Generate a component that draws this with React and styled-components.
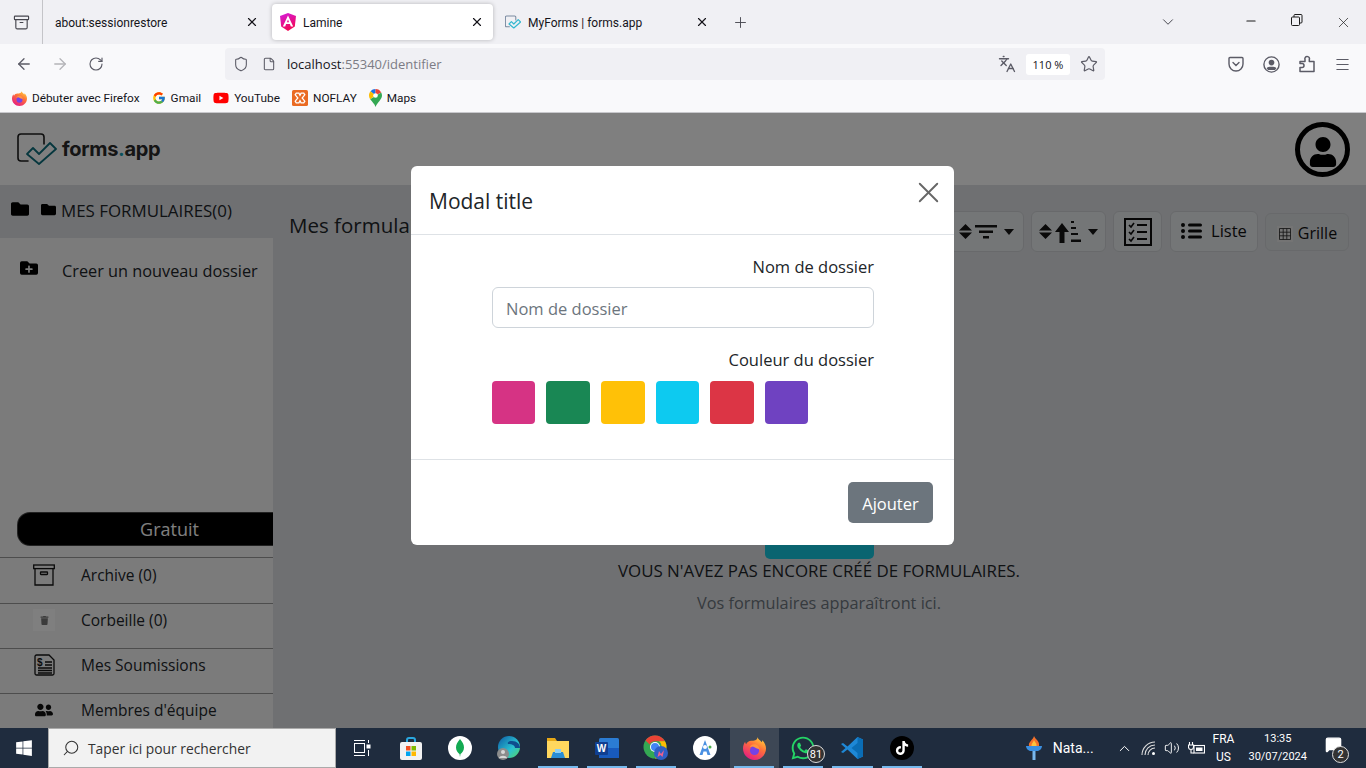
import React from "react";
import styled, { createGlobalStyle } from "styled-components";
import {
  ArrowLeft, ArrowRight, RotateCw, Shield, File, X, Plus, ChevronDown, Minus, Star,
  Languages, Menu, ChevronUp, Search, Volume2, MessageSquare, Archive,
} from "lucide-react";
import { FaFolder, FaFolderPlus, FaWindows, FaWhatsapp, FaTiktok, FaYoutube, FaUserFriends, FaTrash, FaUser } from "react-icons/fa";
import { FcGoogle } from "react-icons/fc";

const Global = createGlobalStyle`
  html, body { margin: 0; padding: 0; height: 100%; overflow: hidden; }
  body { font-family: "Open Sans", "Liberation Sans", sans-serif; }
  #root { height: 100%; }
`;

function App() {
  return (
    <Shell>
      <Global />
      <TabBar>
        <TabsButton><Archive size={17} strokeWidth={1.6} /></TabsButton>
        <Tab>
          <TabTitle>about:sessionrestore</TabTitle>
          <X size={14} />
        </Tab>
        <Tab $active>
          <AngularLogo />
          <TabTitle>Lamine</TabTitle>
          <X size={14} />
        </Tab>
        <Tab>
          <FormsLogo size={16} />
          <TabTitle>MyForms | forms.app</TabTitle>
          <X size={14} />
        </Tab>
        <NewTab><Plus size={17} strokeWidth={1.3} /></NewTab>
        <TabBarEnd>
          <ChevronDown size={18} strokeWidth={1.3} />
          <WinControls>
            <WinButton><Minus size={14} /></WinButton>
            <WinButton><RestoreIcon /></WinButton>
            <WinButton><X size={17} strokeWidth={1} /></WinButton>
          </WinControls>
        </TabBarEnd>
      </TabBar>

      <NavBar>
        <NavButtons>
          <ArrowLeft size={18} strokeWidth={1.7} />
          <ArrowRight size={18} strokeWidth={1.7} color="#b4b4b8" />
          <RotateCw size={16} strokeWidth={1.7} />
        </NavButtons>
        <UrlBar>
          <Shield size={16} strokeWidth={1.6} />
          <File size={14} strokeWidth={1.8} />
          <UrlText>localhost<span>:55340/identifier</span></UrlText>
          <UrlEnd>
            <Languages size={18} strokeWidth={1.8} />
            <ZoomBadge>110 %</ZoomBadge>
            <Star size={18} strokeWidth={1.6} />
          </UrlEnd>
        </UrlBar>
        <NavEnd>
          <PocketIcon />
          <AccountIcon />
          <PuzzleIcon />
          <Menu size={17} strokeWidth={1.5} />
        </NavEnd>
      </NavBar>

      <Bookmarks>
        <Bookmark><FirefoxLogo size={15} />Débuter avec Firefox</Bookmark>
        <Bookmark><FcGoogle size={14} />Gmail</Bookmark>
        <Bookmark><FaYoutube size={16} color="#f00" />YouTube</Bookmark>
        <Bookmark><XamppLogo />NOFLAY</Bookmark>
        <Bookmark><MapsPin />Maps</Bookmark>
      </Bookmarks>

      <Page>
        <Header>
          <Brand>
            <FormsLogo size={40} dark />
            <BrandName>forms<em>.</em>app</BrandName>
          </Brand>
          <Avatar><FaUser size={30} /></Avatar>
        </Header>
        <Body>
          <Sidebar>
            <SideTop>
              <FaFolder size={18} />
              <FaFolder size={15} />
              <span>MES FORMULAIRES(0)</span>
            </SideTop>
            <NewFolder>
              <FaFolderPlus size={18} />
              <span>Creer un nouveau dossier</span>
            </NewFolder>
            <FreePlan>Gratuit</FreePlan>
            <SideItem><SideIcon><BoxIcon /></SideIcon>Archive (0)</SideItem>
            <SideItem><SideIcon $tile><FaTrash size={9} /></SideIcon>Corbeille (0)</SideItem>
            <SideItem><SideIcon><ReceiptIcon /></SideIcon>Mes Soumissions</SideItem>
            <SideItem><SideIcon><FaUserFriends size={18} /></SideIcon>Membres d'équipe</SideItem>
          </Sidebar>
          <Main>
            <ToolRow>
              <MainTitle>Mes formulaires</MainTitle>
              <Tools>
                <ToolButton $w={75}><SortArrows /><FilterLines /><Caret /></ToolButton>
                <ToolButton $w={75}><SortArrows /><SortAsc /><Caret /></ToolButton>
                <ToolButton $w={49}><ChecklistIcon /></ToolButton>
                <ToolButton $w={88} $wide><ListIcon />Liste</ToolButton>
                <ToolButton $w={84} $muted><GridIcon />Grille</ToolButton>
              </Tools>
            </ToolRow>
            <Empty>
              <CreateButton />
              <EmptyTitle>VOUS N'AVEZ PAS ENCORE CRÉÉ DE FORMULAIRES.</EmptyTitle>
              <EmptyText>Vos formulaires apparaîtront ici.</EmptyText>
            </Empty>
          </Main>
        </Body>

        <Backdrop>
          <Modal>
            <ModalHeader>
              <ModalTitle>Modal title</ModalTitle>
              <CloseButton><X size={35} strokeWidth={1.3} /></CloseButton>
            </ModalHeader>
            <ModalBody>
              <FieldLabel>Nom de dossier</FieldLabel>
              <FieldInput placeholder="Nom de dossier" />
              <FieldLabel $second>Couleur du dossier</FieldLabel>
              <Swatches>
                {["#d63384", "#198754", "#ffc107", "#0dcaf0", "#dc3545", "#6f42c1"].map((c) => (
                  <Swatch key={c} $color={c} />
                ))}
              </Swatches>
            </ModalBody>
            <ModalFooter>
              <AddButton>Ajouter</AddButton>
            </ModalFooter>
          </Modal>
        </Backdrop>
      </Page>

      <Taskbar>
        <StartButton><FaWindows size={18} /></StartButton>
        <SearchBox>
          <Search size={18} strokeWidth={1.4} style={{ transform: "scaleX(-1)" }} />
          Taper ici pour rechercher
        </SearchBox>
        <TaskIcons>
          <TaskIcon><TaskViewIcon /></TaskIcon>
          <TaskIcon><StoreIcon /></TaskIcon>
          <TaskIcon><MongoIcon /></TaskIcon>
          <TaskIcon><EdgeIcon /></TaskIcon>
          <TaskIcon $open><ExplorerIcon /></TaskIcon>
          <TaskIcon $open><WordIcon /></TaskIcon>
          <TaskIcon $open><ChromeIcon /></TaskIcon>
          <TaskIcon><CompassIcon /></TaskIcon>
          <TaskIcon $open $current><FirefoxLogo size={23} /></TaskIcon>
          <TaskIcon $open>
            <FaWhatsapp size={26} color="#25d366" />
            <CountBadge>81</CountBadge>
          </TaskIcon>
          <TaskIcon $open><VsCodeIcon /></TaskIcon>
          <TaskIcon $open><TikTokIcon /></TaskIcon>
        </TaskIcons>
        <Tray>
          <Weather><TorchIcon />Nata...</Weather>
          <ChevronUp size={17} strokeWidth={1.4} />
          <WifiIcon />
          <Volume2 size={16} strokeWidth={1.4} />
          <BatteryIcon />
          <TrayText><span>FRA</span><span>US</span></TrayText>
          <Clock><span>13:35</span><span>30/07/2024</span></Clock>
          <Notif>
            <MessageSquare size={17} fill="#fff" />
            <NotifBadge>2</NotifBadge>
          </Notif>
        </Tray>
      </Taskbar>
    </Shell>
  );
}

/* drawings */

const AngularLogo = () => (
  <svg width="16" height="18" viewBox="0 0 16 18">
    <defs>
      <linearGradient id="ang" x1="0.2" y1="0" x2="0.6" y2="1">
        <stop offset="0" stopColor="#d51bd6" />
        <stop offset="1" stopColor="#f5074f" />
      </linearGradient>
    </defs>
    <path d="M8 0 0 3l1.200 10.500L8 18l6.800-4.500L16 3z" fill="url(#ang)" />
    <path d="M8 2.500 2.800 13.500h2.400l.9-2.400h3.800l.9 2.400h2.400zM6.900 9.200 8 6.500l1.100 2.700z" fill="#fff" />
  </svg>
);

const FormsLogo = ({ size, dark }) => (
  <svg width={size} height={size} viewBox="0 0 40 40" fill="none">
    <path
      d="M27 15V8a3 3 0 0 0-3-3H4a3 3 0 0 0-3 3v21a3 3 0 0 0 3 3h7"
      stroke={dark ? "#1c1c1c" : "#7a8aa0"}
      strokeWidth={dark ? 1.6 : 2.6}
      strokeLinecap="round"
    />
    <path
      d="m10 25 6-6 6 6 11-11 6 6-17 15z"
      stroke={dark ? "#0d6f7d" : "#35b8d0"}
      strokeWidth={dark ? 1.8 : 3}
      strokeLinejoin="round"
    />
  </svg>
);

const RestoreIcon = () => (
  <svg width="12" height="12" viewBox="0 0 12 12" fill="none" stroke="#1a1a1a">
    <rect x="0.5" y="3" width="8" height="8.5" rx="1" />
    <path d="M3 3V1.500a1 1 0 0 1 1-1h6a1 1 0 0 1 1 1V8a1 1 0 0 1-1 1H8.500" />
  </svg>
);

const PocketIcon = () => (
  <svg width="16" height="16" viewBox="0 0 16 16" fill="none" stroke="#5b5b66" strokeWidth="1.4">
    <path d="M2 1.500h12a1 1 0 0 1 1 1V8a7 7 0 0 1-14 0V2.500a1 1 0 0 1 1-1z" />
    <path d="m5 6.500 3 3 3-3" strokeLinecap="round" />
  </svg>
);

const AccountIcon = () => (
  <svg width="17" height="17" viewBox="0 0 17 17">
    <circle cx="8.5" cy="8.5" r="7.6" fill="none" stroke="#5b5b66" strokeWidth="1.4" />
    <circle cx="8.5" cy="6.6" r="2.8" fill="#5b5b66" />
    <path d="M3.600 12.200c1-1.800 8.800-1.800 9.800 0L12 14H5z" fill="#5b5b66" />
  </svg>
);

const PuzzleIcon = () => (
  <svg width="16" height="18" viewBox="0 0 16 18" fill="none" stroke="#5b5b66" strokeWidth="1.5" strokeLinejoin="round">
    <path d="M1 6.500h5v-2a2.200 2.200 0 0 1 0-1.500 2.200 2.200 0 0 1 4.300 1.500v2H15v10H1v-4h2a2 2 0 0 0 0-4H1z" />
  </svg>
);

const FirefoxLogo = ({ size }) => (
  <svg width={size} height={size} viewBox="0 0 24 24">
    <defs>
      <linearGradient id={`ffx${size}`} x1="0.8" y1="0" x2="0.2" y2="1">
        <stop offset="0" stopColor="#ffd43b" />
        <stop offset="0.4" stopColor="#ff7139" />
        <stop offset="1" stopColor="#e31587" />
      </linearGradient>
    </defs>
    <path
      d="M15 0c.6 2.500 3 3.200 4.500 5.500.5-.7.6-1.300.7-2C22.900 6.500 24 9.200 24 12c0 6.600-5.400 12-12 12S0 18.600 0 12c0-2.500.8-5 2.200-7 .1 1 .4 1.800 1 2.500C4.300 5.300 6.300 4 8.500 4 11.500 4 15.500 3.500 15 0z"
      fill={`url(#ffx${size})`}
    />
    <circle cx="12" cy="14" r="4.8" fill="#7542e5" />
    <path d="M7 11c1.500-1.500 3.500-1.500 5.500 0s4 1 5 2.500c-.5-3.500-2.500-6-5.500-6S7.500 9 7 11z" fill="#ff9640" />
  </svg>
);

const XamppLogo = () => (
  <svg width="16" height="16" viewBox="0 0 15 15">
    <rect width="15" height="15" rx="1.5" fill="#ea6a22" />
    <path d="M4 3h2.500l1 2 1-2H11l1 1.500-2.500 3 2.500 3L11 12H8.500l-1-2-1 2H4l-1-1.500 2.500-3-2.500-3z" fill="none" stroke="#fff" strokeWidth="1.2" />
  </svg>
);

const MapsPin = () => (
  <svg width="13" height="18" viewBox="0 0 13 18">
    <path d="M6.500 0A6.500 6.500 0 0 0 1.500 2.300l5 4.200z" fill="#1a73e8" />
    <path d="M6.500 0a6.500 6.500 0 0 1 5.700 3.400L6.500 6.500z" fill="#ea4335" />
    <path d="M0 6.500c0-1.600.6-3.100 1.500-4.200l5 4.200-5.300 3.800A6.500 6.500 0 0 1 0 6.500z" fill="#fbbc04" />
    <path d="M12.200 3.400c.5.9.8 2 .8 3.100 0 4-4.500 6.500-6.500 11.500-.8-3-3.500-5.300-5.300-7.700z" fill="#34a853" />
    <circle cx="6.5" cy="6.5" r="2.3" fill="#fff" />
  </svg>
);

const BoxIcon = () => (
  <svg width="22" height="22" viewBox="0 0 22 22" fill="none" stroke="#141414" strokeWidth="1.3">
    <rect x="0.7" y="1" width="20.6" height="3.6" />
    <path d="M2 4.600V21h18V4.600" />
    <rect x="7.5" y="8" width="7" height="2.5" rx="0.5" />
  </svg>
);

const ReceiptIcon = () => (
  <svg width="22" height="22" viewBox="0 0 22 22" fill="none" stroke="#141414" strokeWidth="1.3">
    <path d="M3.500 1H16l5 5v13.500a1.500 1.500 0 0 1-1.500 1.500h-16A1.500 1.500 0 0 1 2 19.500v-17A1.500 1.500 0 0 1 3.500 1z" />
    <path d="M12 8h7M12 11h7M5 14h14M5 16.500h14M5 19h14" />
    <text x="4" y="11.5" fontSize="10" fontWeight="700" fill="#141414" stroke="none" fontFamily="Liberation Sans">$</text>
  </svg>
);

const SortArrows = () => (
  <svg width="13" height="15" viewBox="0 0 13 15" fill="#141414">
    <path d="M6.500 0 13 6.500H0zM6.500 15 0 8.500h13z" />
  </svg>
);

const FilterLines = () => (
  <svg width="22" height="15" viewBox="0 0 22 15" fill="#141414">
    <rect y="1" width="22" height="2.5" />
    <rect x="4" y="6.5" width="14" height="2.5" />
    <rect x="8" y="12" width="6" height="2.5" />
  </svg>
);

const SortAsc = () => (
  <svg width="26" height="23" viewBox="0 0 26 23" fill="#141414">
    <path d="M7 3 14 12H9.500v11h-5V12H0z" />
    <rect x="16" y="1" width="3" height="2" />
    <rect x="16" y="7" width="5" height="2" />
    <rect x="16" y="13" width="7" height="2" />
    <rect x="16" y="19.5" width="10" height="2.5" />
  </svg>
);

const Caret = () => (
  <svg width="10" height="6" viewBox="0 0 10 6" fill="#141414">
    <path d="M0 0h10L5 6z" />
  </svg>
);

const ChecklistIcon = () => (
  <svg width="28" height="28" viewBox="0 0 28 28" fill="none" stroke="#0c0c0c">
    <rect x="1" y="1" width="26" height="26" strokeWidth="2" />
    <path d="m5 7 2 2 3-4M5 14l2 2 3-4M5 21l2 2 3-4" strokeWidth="1.6" />
    <path d="M13 7h10M13 14h10M13 21h10" strokeWidth="2" />
  </svg>
);

const ListIcon = () => (
  <svg width="21" height="16" viewBox="0 0 21 16" fill="#0c0c0c">
    <circle cx="2" cy="2" r="2" />
    <circle cx="2" cy="8" r="2" />
    <circle cx="2" cy="14" r="2" />
    <rect x="7" y="0.5" width="14" height="3" rx="1.5" />
    <rect x="7" y="6.5" width="14" height="3" rx="1.5" />
    <rect x="7" y="12.5" width="14" height="3" rx="1.5" />
  </svg>
);

const GridIcon = () => (
  <GridTile>
    <svg width="12" height="12" viewBox="0 0 12 12" fill="none" stroke="#222">
      <path d="M.5.500h11v11H.5zM4.200.500v11M7.800.500v11M.5 4.200h11M.5 7.800h11" strokeWidth="0.8" />
    </svg>
  </GridTile>
);

const TaskViewIcon = () => (
  <svg width="18" height="18" viewBox="0 0 18 18" fill="none" stroke="#fff">
    <rect x="1.5" y="4.5" width="10" height="9" />
    <path d="M1 1.500h11M1 16.500h11" />
    <rect x="14" y="6" width="3" height="3" fill="#fff" />
    <path d="M15.500 1v3M15.500 11v6" />
  </svg>
);

const StoreIcon = () => (
  <svg width="24" height="24" viewBox="0 0 24 24">
    <path d="M8 7V4a2 2 0 0 1 2-2h4a2 2 0 0 1 2 2v3" fill="none" stroke="#2aa8e0" strokeWidth="2" />
    <rect x="1" y="6" width="22" height="18" rx="2" fill="#f2f2f2" />
    <rect x="7" y="10" width="4.5" height="4.5" fill="#f25022" />
    <rect x="12.5" y="10" width="4.5" height="4.5" fill="#7fba00" />
    <rect x="7" y="15.5" width="4.5" height="4.5" fill="#00a4ef" />
    <rect x="12.5" y="15.5" width="4.5" height="4.5" fill="#ffb900" />
  </svg>
);

const MongoIcon = () => (
  <svg width="24" height="24" viewBox="0 0 24 24">
    <circle cx="12" cy="12" r="12" fill="#fff" />
    <path d="M12 3c2.500 3 4 5.500 4 8.500 0 3-2 5.500-3.500 6.500L12 21l-.5-3C10 17 8 14.500 8 11.500 8 8.500 9.500 6 12 3z" fill="#13aa52" />
  </svg>
);

const EdgeIcon = () => (
  <svg width="24" height="24" viewBox="0 0 24 24">
    <defs>
      <linearGradient id="edge" x1="0" y1="0" x2="1" y2="1">
        <stop offset="0" stopColor="#0c59a4" />
        <stop offset="0.6" stopColor="#2bc3d2" />
        <stop offset="1" stopColor="#5ad35f" />
      </linearGradient>
    </defs>
    <circle cx="12" cy="11" r="11" fill="url(#edge)" />
    <path d="M11 8c5 0 7 2 7 4h5c0-4-3-7-8-7-3 0-5 1-4 3z" fill="#0f4e8e" />
    <circle cx="6" cy="18" r="6" fill="#8c8c8c" />
    <circle cx="6" cy="16" r="2" fill="#d8d8d8" />
    <path d="M2 22c1-3 7-3 8 0z" fill="#d8d8d8" />
  </svg>
);

const ExplorerIcon = () => (
  <svg width="24" height="24" viewBox="0 0 24 24">
    <path d="M1 2h8l2 3H1z" fill="#e6a817" />
    <rect x="1" y="5" width="22" height="17" fill="#ffd75e" />
    <path d="M7 16h10l2 6H5z" fill="#2a8dd4" />
    <rect x="9" y="13" width="6" height="4" fill="#8dd0f5" />
  </svg>
);

const WordIcon = () => (
  <svg width="24" height="24" viewBox="0 0 24 24">
    <rect x="4" y="2" width="20" height="20" rx="1.5" fill="#2b7cd3" />
    <rect x="4" y="12" width="20" height="10" fill="#185abd" />
    <rect x="0" y="6" width="13" height="13" rx="1" fill="#103f91" />
    <text x="6.5" y="16" textAnchor="middle" fontSize="10" fontWeight="700" fill="#fff" fontFamily="Liberation Sans">W</text>
  </svg>
);

const ChromeIcon = () => (
  <svg width="26" height="26" viewBox="0 0 26 26">
    <circle cx="12" cy="12" r="11.5" fill="#34a853" />
    <path d="M12 .5a11.500 11.500 0 0 1 10 5.800H12a5.800 5.800 0 0 0-5.300 3.200L2.500 5.500A11.500 11.500 0 0 1 12 .5z" fill="#ea4335" />
    <path d="M22 6.300a11.500 11.500 0 0 1-10 17.200l5-8.500a5.800 5.800 0 0 0-1-8.700z" fill="#fbbc04" />
    <circle cx="12" cy="12" r="5" fill="#fff" />
    <circle cx="12" cy="12" r="4" fill="#4285f4" />
    <circle cx="18" cy="18" r="7" fill="#2f5fc4" />
    <path d="m14.500 22 1.500-6 2 3 3-4-1.500 7-2-2z" fill="#f0608a" />
  </svg>
);

const CompassIcon = () => (
  <svg width="24" height="24" viewBox="0 0 24 24">
    <circle cx="12" cy="12" r="12" fill="#fff" />
    <path d="M12 4 6.500 19h3l1-3.500h3l1 3.500h3z" fill="#4a90e2" />
    <circle cx="12" cy="11" r="2" fill="#fff" />
    <circle cx="17" cy="11" r="1.5" fill="#4caf50" />
  </svg>
);

const VsCodeIcon = () => (
  <svg width="24" height="24" viewBox="0 0 24 24">
    <path d="M17.500 1 23 3.500v17L17.500 23l-10-9.500L3 17l-2-1 4.500-4L1 8l2-1 4.500 3.500z" fill="#1e88d6" />
    <path d="M17.500 1 23 3.500v17L17.500 23v-6l-6-5 6-5z" fill="#0a6db5" />
  </svg>
);

const TikTokIcon = () => (
  <TikTokDisc><FaTiktok size={14} color="#fff" /></TikTokDisc>
);

const TorchIcon = () => (
  <svg width="16" height="24" viewBox="0 0 16 24">
    <path d="M8 0c1 3 6 5 5 10H3C2 6 7 4 8 0z" fill="#f4722b" />
    <path d="M8 4c.5 2 3 3 2.500 6h-5C5 8 7.500 6 8 4z" fill="#ffc23d" />
    <path d="M0 10h16c0 3-3 5-5 5H5c-2 0-5-2-5-5z" fill="#3b8fe0" />
    <rect x="6.5" y="15" width="3" height="9" fill="#79b8ee" />
  </svg>
);

const WifiIcon = () => (
  <svg width="15" height="15" viewBox="0 0 15 15" fill="none" stroke="#ddd" strokeWidth="1.1">
    <path d="M1 14A13 13 0 0 1 14 1M4 14A10 10 0 0 1 14 4M7 14a7 7 0 0 1 7-7" />
    <circle cx="12.5" cy="12.5" r="1.5" fill="#fff" stroke="none" />
  </svg>
);

const BatteryIcon = () => (
  <svg width="17" height="15" viewBox="0 0 17 15" fill="none" stroke="#fff" strokeWidth="1.1">
    <path d="M1.500 1v3M4.500 1v3M.5 4h5v2a2.500 2.500 0 0 1-5 0zM3 8.500V12h3" />
    <rect x="6" y="4.5" width="10.5" height="7.5" />
    <rect x="8" y="6.5" width="6.5" height="3.5" fill="#fff" stroke="none" />
  </svg>
);

/* chrome */

const Shell = styled.div`
  height: 100vh;
  display: flex;
  flex-direction: column;
  overflow: hidden;
  color: #15141a;
`;

const TabBar = styled.div`
  height: 44px;
  flex: none;
  background: #f0f0f4;
  display: flex;
  align-items: center;
  font-family: Roboto, sans-serif;
  font-size: 12px;
`;

const TabsButton = styled.div`
  width: 43px;
  height: 44px;
  display: flex;
  align-items: center;
  justify-content: center;
  flex: none;
  border-right: 1px solid #c4c4c8;
  box-sizing: border-box;
  color: #45454d;
`;

const Tab = styled.div`
  width: 221px;
  height: 36px;
  margin-left: 4px;
  padding: 0 9px 0 8px;
  box-sizing: border-box;
  display: flex;
  align-items: center;
  gap: 7px;
  border-radius: 4px;
  background: ${(p) => (p.$active ? "#fff" : "transparent")};
  box-shadow: ${(p) => (p.$active ? "0 0 4px rgba(0,0,0,.25)" : "none")};
`;

const TabTitle = styled.span`
  flex: 1;
  padding-top: 1px;
  white-space: nowrap;
`;

const NewTab = styled.div`
  width: 30px;
  margin-left: 7px;
  display: flex;
  justify-content: center;
  color: #45454d;
`;

const TabBarEnd = styled.div`
  margin-left: auto;
  display: flex;
  align-items: center;
  color: #45454d;
`;

const WinControls = styled.div`
  display: flex;
  margin-left: 51px;
  color: #1a1a1a;
`;

const WinButton = styled.div`
  width: 46px;
  display: flex;
  justify-content: center;
`;

const NavBar = styled.div`
  height: 40px;
  flex: none;
  background: #f9f9fb;
  display: flex;
  align-items: center;
  color: #5b5b66;
`;

const NavButtons = styled.div`
  width: 225px;
  padding-left: 15px;
  box-sizing: border-box;
  display: flex;
  align-items: center;
  gap: 18px;
  svg:last-child { margin-left: 1px; }
`;

const UrlBar = styled.div`
  width: 880px;
  height: 32px;
  padding: 0 7px 0 8px;
  box-sizing: border-box;
  border-radius: 4px;
  background: #f0f0f4;
  display: flex;
  align-items: center;
  gap: 13px;
`;

const UrlText = styled.div`
  margin-left: -2px;
  font-size: 13px;
  color: #15141a;
  span { color: #7c7c85; }
`;

const UrlEnd = styled.div`
  margin-left: auto;
  display: flex;
  align-items: center;
  gap: 10px;
`;

const ZoomBadge = styled.div`
  width: 44px;
  height: 21px;
  background: #fff;
  border-radius: 3px;
  font-size: 11px;
  color: #15141a;
  display: flex;
  align-items: center;
  justify-content: center;
`;

const NavEnd = styled.div`
  flex: 1;
  display: flex;
  justify-content: flex-end;
  align-items: center;
  gap: 19px;
  padding-right: 15px;
`;

const Bookmarks = styled.div`
  height: 29px;
  flex: none;
  box-sizing: border-box;
  background: #f9f9fb;
  border-bottom: 1px solid #c8c8cc;
  padding-left: 12px;
  display: flex;
  align-items: center;
  gap: 12px;
  font-family: Roboto, sans-serif;
  font-size: 11.8px;
`;

const Bookmark = styled.div`
  display: flex;
  align-items: center;
  gap: 5px;
`;

/* page */

const Page = styled.div`
  position: relative;
  flex: 1;
  min-height: 0;
  display: flex;
  flex-direction: column;
  overflow: hidden;
  font-size: 16px;
  color: #212529;
`;

const Header = styled.div`
  height: 72px;
  flex: none;
  background: #fff;
  padding: 0 16px 0 17px;
  display: flex;
  align-items: center;
  justify-content: space-between;
`;

const Brand = styled.div`
  display: flex;
  align-items: center;
  gap: 5px;
`;

const BrandName = styled.div`
  margin-top: -1px;
  font-family: Inter, sans-serif;
  font-size: 20px;
  font-weight: 700;
  letter-spacing: -0.3px;
  color: #2a2a2a;
  em { font-style: normal; color: #12a0b5; }
`;

const Avatar = styled.div`
  width: 55px;
  height: 55px;
  border: 5px solid #000;
  border-radius: 50%;
  box-sizing: border-box;
  color: #000;
  display: flex;
  align-items: flex-end;
  justify-content: center;
  overflow: hidden;
  padding-bottom: 5px;
`;

const Body = styled.div`
  flex: 1;
  min-height: 0;
  display: flex;
  background: #dfe1e5;
`;

const Sidebar = styled.div`
  width: 273px;
  flex: none;
  display: flex;
  flex-direction: column;
  overflow: hidden;
  background: #f6f6f6;
`;

const SideTop = styled.div`
  height: 53px;
  flex: none;
  box-sizing: border-box;
  padding: 0 0 3px 11px;
  background: #dfe1e5;
  display: flex;
  align-items: center;
  gap: 12px;
  color: #000;
  svg { margin-top: -2px; }
  span { margin-left: -7px; color: #212529; font-size: 16.9px; }
`;

const NewFolder = styled.div`
  height: 66px;
  flex: none;
  padding-left: 20px;
  display: flex;
  align-items: center;
  gap: 24px;
  color: #000;
  svg { margin-top: -6px; }
  span { color: #212529; font-size: 16.3px; white-space: nowrap; }
`;

const FreePlan = styled.div`
  margin: 209px -48px 12px 18px;
  height: 32px;
  flex: none;
  border-radius: 12px 0 0 12px;
  background: #000;
  color: #fff;
  font-size: 18px;
  display: flex;
  align-items: center;
  justify-content: center;
  box-shadow: 0 0 0 1px #444;
`;

const SideItem = styled.div`
  height: 45px;
  flex: none;
  box-sizing: border-box;
  border-top: 1.5px solid #9a9a9a;
  display: flex;
  align-items: center;
  gap: 26px;
  padding: 0 0 12px 33px;
  font-size: 15.5px;
  ${FreePlan} + & {
    height: 46px;
    padding-bottom: 11px;
  }
`;

const SideIcon = styled.div`
  width: 22px;
  height: 22px;
  display: flex;
  align-items: center;
  justify-content: center;
  color: #111;
  background: ${(p) => (p.$tile ? "#fff" : "transparent")};
  svg { color: ${(p) => (p.$tile ? "#777" : "#111")}; }
`;

const Main = styled.div`
  flex: 1;
  min-width: 0;
  display: flex;
  flex-direction: column;
  padding: 26px 17px 0 16px;
`;

const ToolRow = styled.div`
  display: flex;
  align-items: flex-start;
  justify-content: space-between;
`;

const MainTitle = styled.div`
  font-size: 20.5px;
  line-height: 29px;
  color: #212529;
`;

const Tools = styled.div`
  display: flex;
  align-items: center;
  gap: 7px;
`;

const ToolButton = styled.div`
  width: ${(p) => p.$w}px;
  height: ${(p) => (p.$muted ? "38px" : "41px")};
  margin-left: ${(p) => (p.$wide ? "1px" : "0")};
  padding: ${(p) => (p.$muted ? "2px 0 0" : p.$wide ? "0 0 2px" : "0")};
  box-sizing: border-box;
  border-radius: 6px;
  background: ${(p) => (p.$muted ? "#dde0e3" : "#e9ecef")};
  border: 1px solid #d0d3d6;
  display: flex;
  align-items: center;
  justify-content: center;
  gap: ${(p) => (p.$wide ? "9px" : "3px")};
  color: #111;
  font-size: ${(p) => (p.$wide ? "16.5px" : "16px")};
  svg:last-child:not(:first-child) { margin-left: 4px; }
`;

const GridTile = styled.span`
  width: 16px;
  height: 16px;
  margin-right: 2px;
  margin-top: 2px;
  display: flex;
  align-items: center;
  justify-content: center;
  background: #e8e8e8;
`;

const Empty = styled.div`
  margin-top: 269px;
  display: flex;
  flex-direction: column;
  align-items: center;
`;

const CreateButton = styled.div`
  width: 109px;
  height: 38px;
  border-radius: 5px;
  background: #14c8e0;
`;

const EmptyTitle = styled.div`
  line-height: 24px;
  font-size: 16.9px;
  white-space: nowrap;
`;

const EmptyText = styled.div`
  margin-top: 8px;
  line-height: 24px;
  font-size: 16.3px;
  color: #6c757d;
`;

/* modal */

const Backdrop = styled.div`
  position: absolute;
  inset: 0;
  background: rgba(0, 0, 0, 0.5);
  display: flex;
  justify-content: center;
  align-items: flex-start;
  padding-top: 53px;
`;

const Modal = styled.div`
  width: 543px;
  margin-right: 1px;
  background: #fff;
  border-radius: 6px;
  overflow: hidden;
  font-size: 16.5px;
`;

const ModalHeader = styled.div`
  height: 69px;
  box-sizing: border-box;
  padding: 0 8px 0 18px;
  border-bottom: 1px solid #dee2e6;
  display: flex;
  align-items: center;
  justify-content: space-between;
`;

const ModalTitle = styled.div`
  font-size: 21px;
  margin-top: 2px;
`;

const CloseButton = styled.div`
  color: #666;
  display: flex;
  margin-top: -16px;
`;

const ModalBody = styled.div`
  height: 225px;
  box-sizing: border-box;
  padding: 19px 80px 0 81px;
  border-bottom: 1px solid #dee2e6;
`;

const FieldLabel = styled.div`
  text-align: right;
  line-height: 25px;
  margin-top: ${(p) => (p.$second ? "19px" : "0")};
`;

const FieldInput = styled.input`
  display: block;
  width: 100%;
  height: 41px;
  margin-top: 8px;
  padding: 2px 13px 0;
  box-sizing: border-box;
  border: 1px solid #ced4da;
  border-radius: 6px;
  font: inherit;
  outline: none;
  &::placeholder { color: #6c757d; opacity: 1; }
`;

const Swatches = styled.div`
  display: flex;
  gap: 11px;
  margin: 9px 0 0 -0.15px;
`;

const Swatch = styled.div`
  width: 43.6px;
  height: 43px;
  border-radius: 4px;
  background: ${(p) => p.$color};
`;

const ModalFooter = styled.div`
  height: 85px;
  box-sizing: border-box;
  padding: 22px 21px 0 0;
  display: flex;
  justify-content: flex-end;
  align-items: flex-start;
`;

const AddButton = styled.button`
  width: 85px;
  height: 41px;
  padding: 2px 0 0;
  border: none;
  border-radius: 5px;
  background: #6c757d;
  color: #fff;
  font: inherit;
`;

/* taskbar */

const Taskbar = styled.div`
  height: 40px;
  flex: none;
  background: #1f2c3e;
  display: flex;
  align-items: center;
  color: #fff;
  font-family: Roboto, sans-serif;
  font-size: 12px;
`;

const StartButton = styled.div`
  width: 48px;
  display: flex;
  justify-content: center;
`;

const SearchBox = styled.div`
  width: 288px;
  height: 40px;
  box-sizing: border-box;
  padding-left: 13px;
  background: #f2f2f2;
  color: #333;
  border: 1px solid #aaa;
  display: flex;
  align-items: center;
  gap: 8px;
  font-family: "Open Sans", sans-serif;
  font-size: 13.8px;
`;

const TaskIcons = styled.div`
  display: flex;
  margin-left: 1px;
`;

const TaskIcon = styled.div`
  position: relative;
  width: 49.1px;
  height: 40px;
  display: flex;
  align-items: center;
  justify-content: center;
  background: ${(p) => (p.$current ? "#3d4755" : "transparent")};
  &::after {
    content: "";
    display: ${(p) => (p.$open ? "block" : "none")};
    position: absolute;
    left: 4.5px;
    right: 4.5px;
    bottom: 0;
    height: 2px;
    background: #76b9ed;
  }
`;

const CountBadge = styled.div`
  position: absolute;
  right: 3px;
  bottom: 5px;
  width: 18px;
  height: 18px;
  border-radius: 50%;
  border: 1px solid #ddd;
  box-sizing: border-box;
  background: #333;
  font-size: 11px;
  display: flex;
  align-items: center;
  justify-content: center;
`;

const TikTokDisc = styled.div`
  width: 24px;
  height: 24px;
  border-radius: 50%;
  background: #000;
  display: flex;
  align-items: center;
  justify-content: center;
`;

const Tray = styled.div`
  margin-left: auto;
  display: flex;
  align-items: center;
  gap: 8px;
  padding-right: 17px;
`;

const Weather = styled.div`
  display: flex;
  align-items: center;
  gap: 11px;
  font-size: 14px;
  margin-right: 14px;
`;

const TrayText = styled.div`
  display: flex;
  flex-direction: column;
  align-items: center;
  line-height: 18px;
`;

const Clock = styled.div`
  display: flex;
  flex-direction: column;
  align-items: center;
  line-height: 18px;
  margin-left: 6px;
  font-size: 11px;
`;

const Notif = styled.div`
  position: relative;
  width: 24px;
  height: 24px;
  margin-left: 10px;
`;

const NotifBadge = styled.div`
  position: absolute;
  right: 0;
  bottom: -3px;
  width: 17px;
  height: 17px;
  border-radius: 50%;
  border: 1px solid #ddd;
  box-sizing: border-box;
  background: #333;
  font-size: 11px;
  display: flex;
  align-items: center;
  justify-content: center;
`;

export default App;
